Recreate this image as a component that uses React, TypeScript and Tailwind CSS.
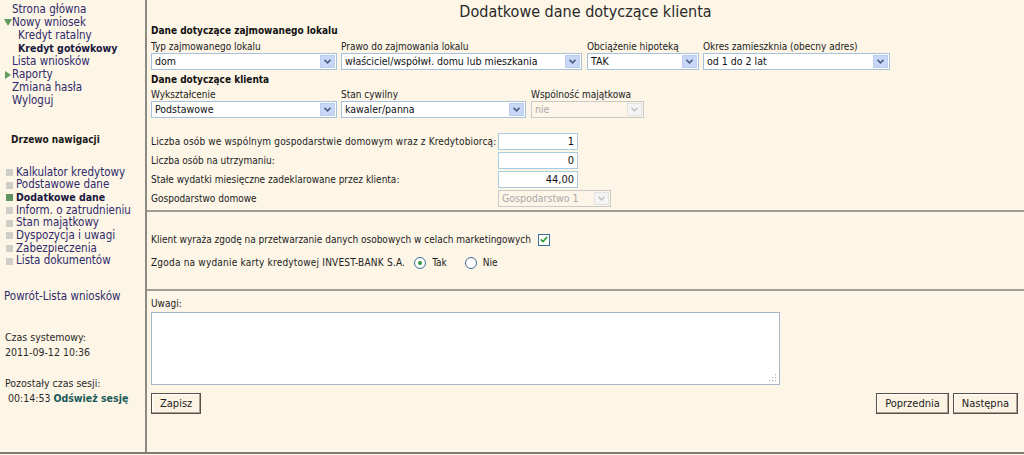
import React from "react";

const menu = [
    { label: "Strona główna", indent: false, bold: false, arrow: null },
    { label: "Nowy wniosek", indent: false, bold: false, arrow: "down" },
    { label: "Kredyt ratalny", indent: true, bold: false, arrow: null },
    { label: "Kredyt gotówkowy", indent: true, bold: true, arrow: null },
    { label: "Lista wniosków", indent: false, bold: false, arrow: null },
    { label: "Raporty", indent: false, bold: false, arrow: "right" },
    { label: "Zmiana hasła", indent: false, bold: false, arrow: null },
    { label: "Wyloguj", indent: false, bold: false, arrow: null },
];

const tree = [
    "Kalkulator kredytowy",
    "Podstawowe dane",
    "Dodatkowe dane",
    "Inform. o zatrudnieniu",
    "Stan majątkowy",
    "Dyspozycja i uwagi",
    "Zabezpieczenia",
    "Lista dokumentów",
];

function Select({ value, width, disabled }: { value: string; width: string; disabled?: boolean }) {
    return (
        <div
            className={`${width} h-[17px] flex items-center border ${
                disabled ? "border-[#c9c9c9] bg-[#fdf6e8] text-[#a9a9a9]" : "border-[#a9c1dc] bg-white text-[#111]"
            }`}
        >
            <span className="flex-1 pl-[3px] text-[10.5px] leading-none whitespace-nowrap overflow-hidden">{value}</span>
            <span
                className={`w-[15px] h-[13px] mr-[1px] shrink-0 flex items-center justify-center border ${
                    disabled ? "border-[#e2e2e2] bg-[#f4f4f4]" : "border-[#bcccef] bg-[#c8d7f6]"
                }`}
            >
                <svg width="7" height="5" viewBox="0 0 7 5">
                    <path d="M0.5 0.8 L3.5 3.8 L6.5 0.8" fill="none" stroke={disabled ? "#c4c4c4" : "#4a5f8a"} strokeWidth="1.6" />
                </svg>
            </span>
        </div>
    );
}

function NumInput({ value }: { value: string }) {
    return (
        <div className="w-[80px] h-[17px] border border-[#a8cde2] bg-white flex items-center justify-end pr-[3px] text-[11px] leading-none text-[#111]">
            {value}
        </div>
    );
}

function Radio({ checked }: { checked?: boolean }) {
    return (
        <span className="w-[12px] h-[12px] rounded-full border border-[#3d6c95] bg-white flex items-center justify-center">
            {checked && <span className="w-[4px] h-[4px] rounded-full bg-[#2f9a3c]" />}
        </span>
    );
}

function Btn({ label }: { label: string }) {
    return (
        <button className="h-[21px] px-[8px] border border-[#5a514a] shadow-[inset_-1px_-1px_0_#a89f96,inset_1px_1px_0_#ffffff] bg-[#fcf3e3] text-[11px] text-[#222] leading-none">
            {label}
        </button>
    );
}

export default function App() {
    return (
        <div className="w-[1024px] h-[455px] bg-[#fdf5e6] font-['DejaVu_Sans_Condensed','DejaVu_Sans',Verdana,sans-serif] font-stretch-condensed">
            <div className="h-[454px] flex border-b-2 border-[#7f7b74]">
                {/* Sidebar */}
                <div className="w-[147px] shrink-0 border-r-2 border-[#8c8a82] flex flex-col pt-[3px]">
                    <div className="flex flex-col">
                        {menu.map((m) => (
                            <div
                                key={m.label}
                                className={`h-[13px] flex items-center leading-none ${
                                    m.bold ? "text-[10.5px] font-bold text-[#18183f]" : "text-[11.5px] text-[#2e2a6b]"
                                } ${m.indent ? "pl-[18px]" : m.arrow ? "pl-[4px]" : "pl-[12px]"}`}
                            >
                                {m.arrow === "down" && (
                                    <svg width="8" height="7" viewBox="0 0 8 7">
                                        <path d="M0 0 H8 L4 7 Z" fill="#5f9a5f" />
                                    </svg>
                                )}
                                {m.arrow === "right" && (
                                    <svg width="8" height="8" viewBox="0 0 8 8">
                                        <path d="M1 0 L7 4 L1 8 Z" fill="#5f9a5f" />
                                    </svg>
                                )}
                                <span>{m.label}</span>
                            </div>
                        ))}
                    </div>

                    <div className="mt-[28px] pl-[11px] text-[10px] font-bold text-[#1a1a1a] leading-none">Drzewo nawigacji</div>

                    <div className="mt-[21px] flex flex-col">
                        {tree.map((t) => {
                            const active = t === "Dodatkowe dane";
                            return (
                                <div
                                    key={t}
                                    className={`h-[12.7px] flex items-center pl-[6px] leading-none ${
                                        active ? "text-[10.5px] font-bold text-[#18183f]" : "text-[11.5px] text-[#2e2a6b]"
                                    }`}
                                >
                                    <span className={`w-[7px] h-[7px] mr-[3px] ${active ? "bg-[#5e9460]" : "bg-[#cfcdc8]"}`} />
                                    {t}
                                </div>
                            );
                        })}
                    </div>

                    <div className="mt-[23px] pl-[4px] text-[11.5px] text-[#2e2a6b] leading-none">Powrót-Lista wniosków</div>

                    <div className="mt-[28px] pl-[5px] text-[10.5px] text-[#2a2a2a] leading-[15px]">
                        <div>Czas systemowy:</div>
                        <div>2011-09-12 10:36</div>
                    </div>

                    <div className="mt-[16px] pl-[5px] text-[10.5px] text-[#2a2a2a] leading-[15px]">
                        <div>Pozostały czas sesji:</div>
                        <div className="pl-[3px]">
                            00:14:53 <span className="font-bold text-[#1a5a58]">Odśwież sesję</span>
                        </div>
                    </div>
                </div>

                {/* Main */}
                <div className="flex-1 flex flex-col text-[10px] text-[#222]">
                    <div className="h-[24px] flex items-center justify-center text-[16px] text-[#2a2a2a]">
                        Dodatkowe dane dotyczące klienta
                    </div>

                    <div className="pl-[4px] pr-[6px]">
                        <div className="h-[12px] flex items-center font-bold text-[#111]">Dane dotyczące zajmowanego lokalu</div>
                        <div className="flex gap-[4px] mt-[4px]">
                            <div className="flex flex-col gap-[1px]">
                                <span className="h-[12px] flex items-center">Typ zajmowanego lokalu</span>
                                <Select value="dom" width="w-[186px]" />
                            </div>
                            <div className="flex flex-col gap-[1px]">
                                <span className="h-[12px] flex items-center">Prawo do zajmowania lokalu</span>
                                <Select value="właściciel/współwł. domu lub mieszkania" width="w-[241px]" />
                            </div>
                            <div className="flex flex-col gap-[1px] ml-[1px]">
                                <span className="h-[12px] flex items-center">Obciążenie hipoteką</span>
                                <Select value="TAK" width="w-[112px]" />
                            </div>
                            <div className="flex flex-col gap-[1px]">
                                <span className="h-[12px] flex items-center">Okres zamieszknia (obecny adres)</span>
                                <Select value="od 1 do 2 lat" width="w-[187px]" />
                            </div>
                        </div>

                        <div className="h-[12px] mt-[3px] flex items-center font-bold text-[#111]">Dane dotyczące klienta</div>
                        <div className="flex gap-[4px] mt-[3px]">
                            <div className="flex flex-col gap-[1px]">
                                <span className="h-[12px] flex items-center">Wykształcenie</span>
                                <Select value="Podstawowe" width="w-[186px]" />
                            </div>
                            <div className="flex flex-col gap-[1px]">
                                <span className="h-[12px] flex items-center">Stan cywilny</span>
                                <Select value="kawaler/panna" width="w-[185px]" />
                            </div>
                            <div className="flex flex-col gap-[1px] ml-[1px]">
                                <span className="h-[12px] flex items-center">Wspólność majątkowa</span>
                                <Select value="nie" width="w-[113px]" disabled />
                            </div>
                        </div>

                        <div className="mt-[15px] flex flex-col gap-[2px]">
                            <div className="flex items-center">
                                <span className="w-[347px] whitespace-nowrap tracking-[0.15px]">Liczba osób we wspólnym gospodarstwie domowym wraz z Kredytobiorcą:</span>
                                <NumInput value="1" />
                            </div>
                            <div className="flex items-center">
                                <span className="w-[347px]">Liczba osób na utrzymaniu:</span>
                                <NumInput value="0" />
                            </div>
                            <div className="flex items-center">
                                <span className="w-[347px]">Stałe wydatki miesięczne zadeklarowane przez klienta:</span>
                                <NumInput value="44,00" />
                            </div>
                            <div className="flex items-center">
                                <span className="w-[347px]">Gospodarstwo domowe</span>
                                <Select value="Gospodarstwo 1" width="w-[113px]" disabled />
                            </div>
                        </div>
                    </div>

                    <div className="mt-[3px] h-[2px] bg-[#a19d95]" />

                    <div className="pl-[4px] pt-[21px] pb-[20px] flex flex-col gap-[10px]">
                        <div className="h-[13px] flex items-center gap-[7px]">
                            <span>Klient wyraża zgodę na przetwarzanie danych osobowych w celach marketingowych</span>
                            <span className="w-[12px] h-[12px] border border-[#3d6c95] bg-white flex items-center justify-center">
                                <svg width="8" height="7" viewBox="0 0 8 7">
                                    <path d="M0.8 3.4 L3 5.6 L7.2 1" fill="none" stroke="#25a02f" strokeWidth="1.7" />
                                </svg>
                            </span>
                        </div>
                        <div className="h-[13px] flex items-center">
                            <span className="tracking-[0.2px]">Zgoda na wydanie karty kredytowej INVEST-BANK S.A.</span>
                            <span className="ml-[9px]"><Radio checked /></span>
                            <span className="ml-[6px]">Tak</span>
                            <span className="ml-[18px]"><Radio /></span>
                            <span className="ml-[6px]">Nie</span>
                        </div>
                    </div>

                    <div className="h-[2px] bg-[#a19d95]" />

                    <div className="pl-[4px] pr-[6px] pt-[6px] flex flex-col">
                        <span className="h-[12px] flex items-center">Uwagi:</span>
                        <div className="mt-[3px] w-[629px] h-[73px] border border-[#a7b6c4] bg-white relative">
                            <svg width="8" height="8" viewBox="0 0 8 8" className="absolute right-[2px] bottom-[2px]">
                                <g fill="#b5b5b5">
                                    <rect x="6" y="0" width="1.2" height="1.2" />
                                    <rect x="3" y="3" width="1.2" height="1.2" />
                                    <rect x="6" y="3" width="1.2" height="1.2" />
                                    <rect x="0" y="6" width="1.2" height="1.2" />
                                    <rect x="3" y="6" width="1.2" height="1.2" />
                                    <rect x="6" y="6" width="1.2" height="1.2" />
                                </g>
                            </svg>
                        </div>
                        <div className="mt-[8px] flex items-center">
                            <Btn label="Zapisz" />
                            <div className="ml-auto flex gap-[4px]">
                                <Btn label="Poprzednia" />
                                <Btn label="Następna" />
                            </div>
                        </div>
                    </div>
                </div>
            </div>
        </div>
    );
}
